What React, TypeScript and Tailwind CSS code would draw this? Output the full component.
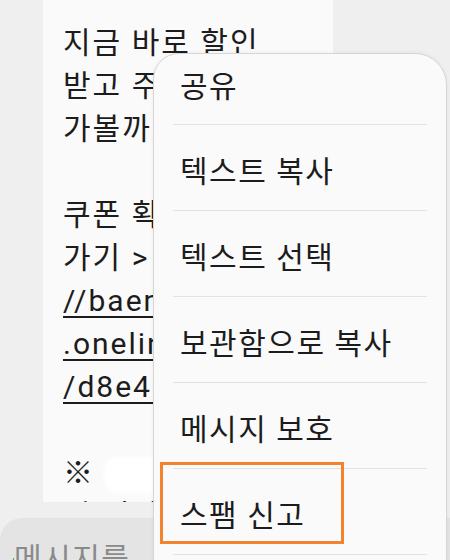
import React from 'react';

const font = { fontFamily: 'Roboto, "Noto Sans CJK KR", sans-serif' };

const lines = [
  '지금 바로 할인',
  '받고 주문하러',
  '가볼까요?',
  '',
  '쿠폰 확인하러',
  '가기 > https:',
  '//baemin.page',
  '.onelink.me/lo',
  '/d8e4d2fa',
  '',
  '※ 쿠폰은 일부',
  '및 기간 한정',
];

const menuItems = ['텍스트 복사', '텍스트 선택', '보관함으로 복사', '메시지 보호', '스팸 신고'];

export default function App() {
  return (
    <div className="relative w-[450px] h-[560px] overflow-hidden bg-[#efefef] text-[#1c1c1c]" style={font}>
      {/* message bubble */}
      <div className="ml-[43px] w-[290px] h-[502px] bg-[#fafafa] overflow-hidden pt-[21px] pl-[20px]">
        {lines.map((l, i) => {
          const link = i >= 6 && i <= 8;
          return (
            <div
              key={i}
              className={`h-[43px] leading-[43px] text-[30px] tracking-[2px] whitespace-nowrap ${link ? 'underline underline-offset-[5px] decoration-[1.5px] tracking-[0.5px]' : ''}`}
            >
              {i === 10 ? (
                <span className="relative">
                  ※ <span className="inline-block w-[66px] h-[36px] align-middle rounded-[14px] bg-white blur-[2px]" />
                </span>
              ) : (
                l || '\u00a0'
              )}
            </div>
          );
        })}
      </div>

      {/* input bar */}
      <div className="mt-[16px] h-[60px] rounded-tl-[22px] bg-[#e4e4e4] flex items-start pt-[26px] pl-[13px]">
        <span className="w-[1px] h-[10px] bg-[#2eb82e] mt-[14px]" />
        <span className="text-[30px] tracking-[1.5px] leading-none text-[#8a8a8a]">메시지를</span>
      </div>

      {/* context menu */}
      <div className="absolute left-[153px] top-[53px] w-[294px] h-[540px] bg-[#fafafa] border-[1.5px] border-[#d6d6d6] rounded-tl-[26px] rounded-tr-[32px] shadow-[0_0_4px_rgba(0,0,0,0.06)] text-[30px] tracking-[1.5px]">
        <div className="h-[70px] flex items-center pl-[26px] pb-[6px]">공유</div>
        {menuItems.map((m) => (
          <div key={m} className="mx-[19px] h-[86px] border-t border-[#e3e3e3] flex items-center pl-[7px] pt-[8px]">
            {m}
          </div>
        ))}
        <div className="mx-[19px] border-t border-[#e3e3e3]" />
      </div>

      {/* highlight */}
      <div className="absolute left-[160px] top-[462px] w-[184px] h-[82px] border-[3px] border-[#f2842f]" />
    </div>
  );
}
